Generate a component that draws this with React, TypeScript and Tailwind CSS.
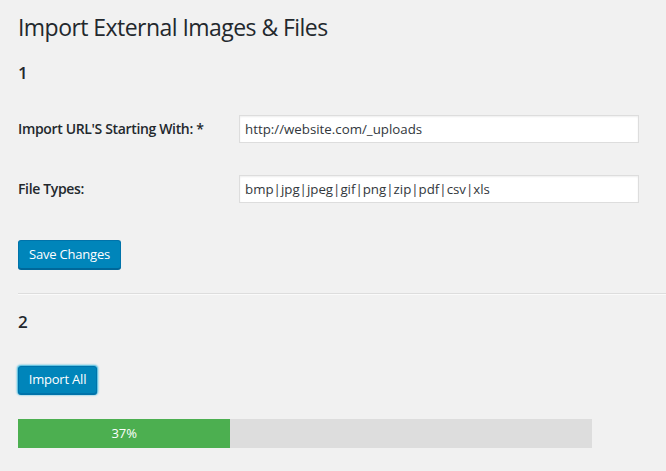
import React from "react";

const font = { fontFamily: '"Open Sans", "Noto Sans", sans-serif' };

function Field({ label, value }: { label: string; value: string }) {
  return (
    <div className="flex items-center">
      <label className="w-[221px] shrink-0 text-[14px] leading-[20px] font-semibold tracking-[-0.35px] text-[#23282d]">{label}</label>
      <input
        className="h-[28px] w-[400px] border border-[#ddd] bg-white px-[5px] text-[13.3px] text-[#32373c] shadow-[inset_0_1px_2px_rgba(0,0,0,0.07)] outline-none"
        defaultValue={value}
        readOnly
      />
    </div>
  );
}

export default function App() {
  const progress = 37;
  return (
    <div className="min-h-[471px] bg-[#f1f1f1] pl-[18px] pt-[13px]" style={font}>
      <h1 className="text-[23px] leading-[29px] font-normal tracking-[-0.55px] text-[#23282d]">Import External Images &amp; Files</h1>

      <h2 className="mt-[20px] text-[17px] leading-[22px] font-semibold text-[#23282d]">1</h2>

      <div className="mt-[31px] flex flex-col gap-[32px]">
        <Field label="Import URL'S Starting With: *" value="http://website.com/_uploads" />
        <Field label="File Types:" value="bmp|jpg|jpeg|gif|png|zip|pdf|csv|xls" />
      </div>

      <button className="mt-[37px] flex h-[29px] w-[103px] items-center justify-center rounded-[3px] border border-[#0073aa] border-b-[#006799] bg-[#0085ba] text-[13px] tracking-[-0.2px] text-white shadow-[0_1px_0_#006799]">
        Save Changes
      </button>

      <hr className="mt-[24px] border-t border-b border-t-[#ddd] border-b-[#fafafa]" />

      <h2 className="mt-[16px] text-[17px] leading-[22px] font-semibold text-[#23282d]">2</h2>

      <button className="mt-[33px] flex h-[28px] w-[79px] items-center justify-center rounded-[3px] border border-[#0073aa] bg-[#0085ba] text-[13px] tracking-[-0.2px] text-white shadow-[0_1px_0_#0073aa,0_0_2px_1px_#33b3db]">
        Import All
      </button>

      <div className="mt-[25px] h-[29px] w-[574px] bg-[#ddd]">
        <div
          className="flex h-full items-center justify-center bg-[#4caf50] text-[13px] text-white"
          style={{ width: `${progress}%` }}
        >
          {progress}%
        </div>
      </div>
    </div>
  );
}
